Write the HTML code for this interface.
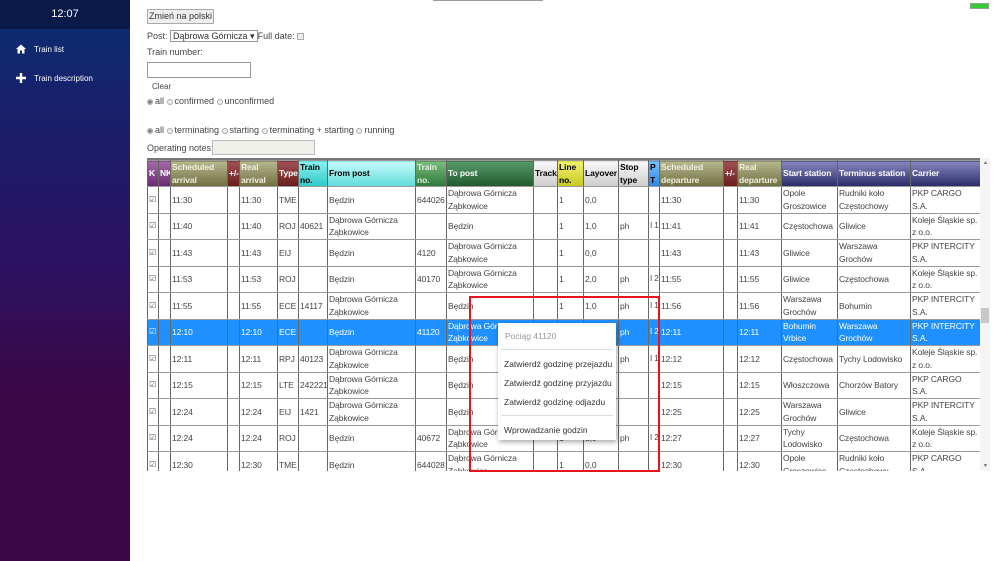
<!DOCTYPE html>
<html><head><meta charset="utf-8"><style>
*{box-sizing:border-box;margin:0;padding:0}
body{width:1000px;height:561px;overflow:hidden;background:#fff;font-family:"Liberation Sans",sans-serif;font-size:9px;color:#444;position:relative}
#side{position:absolute;left:0;top:0;width:130px;height:561px;background:linear-gradient(#0d2a70 29px,#1a1f6a 120px,#2c1262 260px,#3b0745 400px,#3b0745)}
#clock{height:29px;background:#0a1a48;color:#fff;font-size:11px;text-align:center;line-height:29px}
.nav{position:absolute;left:16px;color:#fff;font-size:8px;display:flex;align-items:center}
.nav svg{margin-right:8px}
.a{position:absolute}
.btn{left:147px;top:9px;width:67px;height:15px;border:1px solid #aaa;background:#eee;font-size:9px;line-height:13px;text-align:center;color:#333;white-space:nowrap}
.radio{display:inline-block;width:6px;height:6px;border:1px solid #aaa;border-radius:50%;background:#eee;vertical-align:-1px;margin-right:2px}
.radio.on{background:radial-gradient(#777 1.5px,#eee 2px)}
#tw{position:absolute;left:147px;top:158px;width:833px;height:313px;overflow:hidden;border-top:2px solid #777}
table{border-collapse:collapse;table-layout:fixed;width:833px}
td,th{border:1px solid #666;border-top-color:#999;border-bottom-color:#999;padding:0 0 0 1px;overflow:hidden;line-height:12.5px;font-size:8.5px;text-align:left;vertical-align:middle;letter-spacing:-0.1px}
th{height:24px;font-weight:bold;color:#fff}
td{height:26.5px}
.nw{white-space:nowrap}
.pu{background:linear-gradient(#a56aa8,#6a2a72)}
.ol{background:linear-gradient(#b8b890,#6e6e40);color:#f0f0e0}
.mr{background:linear-gradient(#a05050,#6a1c1c)}
.cy{background:linear-gradient(#8af0f0,#30c8c8);color:#000}
.cy2{background:linear-gradient(#c8fafa,#60dcdc);color:#000}
.gn{background:linear-gradient(#7cbc7c,#2e7a3a);color:#e0f0e0}
.dg{background:linear-gradient(#5a9a6a,#1e5a2a)}
.lg{background:linear-gradient(#fafafa,#ccc);color:#000}
.ye{background:linear-gradient(#f0f070,#c8c820);color:#000}
.bl{background:linear-gradient(#7ac0ff,#2a88e8);color:#000}
.nv{background:linear-gradient(#8888c0,#2a2a6a)}
tr.sel td{background:#1e90ff;color:#fff}
.cb{font-size:8px;color:#555}
td:nth-child(15){white-space:nowrap;font-size:8px}
td:nth-child(6),td:nth-child(7),td:nth-child(9){white-space:nowrap}
.menu div{white-space:nowrap}
</style></head><body>
<div id="side"><div id="clock">12:07</div>
<div class="nav" style="top:44px"><svg width="10" height="10" viewBox="0 0 10 10"><path d="M5 0.5L0 5h1.5v4.5h2.5v-3h2v3h2.5V5H10z" fill="#fff"/></svg>Train list</div>
<div class="nav" style="top:73px"><svg width="10" height="10" viewBox="0 0 10 10"><path d="M3.8 0h2.4v3.8H10v2.4H6.2V10H3.8V6.2H0V3.8h3.8z" fill="#fff"/></svg>Train description</div>
</div>
<div class="a" style="left:433px;top:0;width:110px;height:1px;background:#999"></div>
<div class="a" style="left:970px;top:3px;width:19px;height:6px;background:#3c3;border:1px solid #8a8"></div>
<div class="a btn">Zmień na polski</div>
<div class="a" style="left:147px;top:30px;white-space:nowrap">Post: <span style="display:inline-block;border:1px solid #999;padding:0 2px;height:12px;line-height:11px;color:#333">Dąbrowa Górnicza ▾</span>Full date: <span style="display:inline-block;width:7px;height:7px;border:1px solid #aaa;background:#eee;vertical-align:-1px"></span></div>
<div class="a" style="left:147px;top:47px">Train number:</div>
<div class="a" style="left:147px;top:62px;width:104px;height:16px;border:1px solid #999"></div>
<div class="a" style="left:152px;top:82px;font-size:8px">Clear</div>
<div class="a" style="left:147px;top:96px;white-space:nowrap"><span class="radio on"></span>all <span class="radio"></span>confirmed <span class="radio"></span>unconfirmed</div>
<div class="a" style="left:147px;top:125px;white-space:nowrap"><span class="radio on"></span>all <span class="radio"></span>terminating <span class="radio"></span>starting <span class="radio"></span>terminating + starting <span class="radio"></span>running</div>
<div class="a" style="left:147px;top:143px">Operating notes:</div>
<div class="a" style="left:212px;top:140px;width:103px;height:15px;border:1px solid #bbb;background:#f0f0ea"></div>
<div id="tw"><table>
<colgroup><col style="width:11px"><col style="width:12px"><col style="width:57px"><col style="width:12px"><col style="width:38px"><col style="width:21px"><col style="width:29px"><col style="width:88px"><col style="width:31px"><col style="width:87px"><col style="width:24px"><col style="width:26px"><col style="width:35px"><col style="width:30px"><col style="width:11px"><col style="width:64px"><col style="width:14px"><col style="width:44px"><col style="width:56px"><col style="width:73px"><col style="width:70px"></colgroup>
<tr><th class="pu">K</th><th class="pu">NK</th><th class="ol">Scheduled arrival</th><th class="mr">+/-</th><th class="ol">Real arrival</th><th class="mr">Type</th><th class="cy">Train no.</th><th class="cy2">From post</th><th class="gn">Train no.</th><th class="dg">To post</th><th class="lg">Track</th><th class="ye">Line no.</th><th class="lg">Layover</th><th class="lg">Stop type</th><th class="bl">P T</th><th class="ol">Scheduled departure</th><th class="mr">+/-</th><th class="ol">Real departure</th><th class="nv nw">Start station</th><th class="nv nw">Terminus station</th><th class="nv">Carrier</th></tr>
<tr><td class="cb">☑</td><td></td><td>11:30</td><td></td><td>11:30</td><td>TME</td><td></td><td>Będzin</td><td>644026</td><td>Dąbrowa Górnicza Ząbkowice</td><td></td><td>1</td><td>0,0</td><td></td><td></td><td>11:30</td><td></td><td>11:30</td><td>Opole Groszowice</td><td>Rudniki koło Częstochowy</td><td>PKP CARGO<br>S.A.</td></tr>
<tr><td class="cb">☑</td><td></td><td>11:40</td><td></td><td>11:40</td><td>ROJ</td><td>40621</td><td>Dąbrowa Górnicza Ząbkowice</td><td></td><td>Będzin</td><td></td><td>1</td><td>1,0</td><td>ph</td><td>I 1</td><td>11:41</td><td></td><td>11:41</td><td>Częstochowa</td><td>Gliwice</td><td>Koleje Śląskie sp. z o.o.</td></tr>
<tr><td class="cb">☑</td><td></td><td>11:43</td><td></td><td>11:43</td><td>EIJ</td><td></td><td>Będzin</td><td>4120</td><td>Dąbrowa Górnicza Ząbkowice</td><td></td><td>1</td><td>0,0</td><td></td><td></td><td>11:43</td><td></td><td>11:43</td><td>Gliwice</td><td>Warszawa Grochów</td><td>PKP INTERCITY S.A.</td></tr>
<tr><td class="cb">☑</td><td></td><td>11:53</td><td></td><td>11:53</td><td>ROJ</td><td></td><td>Będzin</td><td>40170</td><td>Dąbrowa Górnicza Ząbkowice</td><td></td><td>1</td><td>2,0</td><td>ph</td><td>I 2</td><td>11:55</td><td></td><td>11:55</td><td>Gliwice</td><td>Częstochowa</td><td>Koleje Śląskie sp. z o.o.</td></tr>
<tr><td class="cb">☑</td><td></td><td>11:55</td><td></td><td>11:55</td><td>ECE</td><td>14117</td><td>Dąbrowa Górnicza Ząbkowice</td><td></td><td>Będzin</td><td></td><td>1</td><td>1,0</td><td>ph</td><td>I 1</td><td>11:56</td><td></td><td>11:56</td><td>Warszawa Grochów</td><td>Bohumin</td><td>PKP INTERCITY S.A.</td></tr>
<tr class="sel"><td class="cb">☑</td><td></td><td>12:10</td><td></td><td>12:10</td><td>ECE</td><td></td><td>Będzin</td><td>41120</td><td>Dąbrowa Górnicza Ząbkowice</td><td></td><td>1</td><td>1,0</td><td>ph</td><td>I 2</td><td>12:11</td><td></td><td>12:11</td><td>Bohumin Vrbice</td><td>Warszawa Grochów</td><td>PKP INTERCITY S.A.</td></tr>
<tr><td class="cb">☑</td><td></td><td>12:11</td><td></td><td>12:11</td><td>RPJ</td><td>40123</td><td>Dąbrowa Górnicza Ząbkowice</td><td></td><td>Będzin</td><td></td><td>1</td><td>1,0</td><td>ph</td><td>I 1</td><td>12:12</td><td></td><td>12:12</td><td>Częstochowa</td><td>Tychy Lodowisko</td><td>Koleje Śląskie sp. z o.o.</td></tr>
<tr><td class="cb">☑</td><td></td><td>12:15</td><td></td><td>12:15</td><td>LTE</td><td>242221</td><td>Dąbrowa Górnicza Ząbkowice</td><td></td><td>Będzin</td><td></td><td>1</td><td>0,0</td><td></td><td></td><td>12:15</td><td></td><td>12:15</td><td>Włoszczowa</td><td>Chorzów Batory</td><td>PKP CARGO<br>S.A.</td></tr>
<tr><td class="cb">☑</td><td></td><td>12:24</td><td></td><td>12:24</td><td>EIJ</td><td>1421</td><td>Dąbrowa Górnicza Ząbkowice</td><td></td><td>Będzin</td><td></td><td>1</td><td>1,0</td><td></td><td></td><td>12:25</td><td></td><td>12:25</td><td>Warszawa Grochów</td><td>Gliwice</td><td>PKP INTERCITY S.A.</td></tr>
<tr><td class="cb">☑</td><td></td><td>12:24</td><td></td><td>12:24</td><td>ROJ</td><td></td><td>Będzin</td><td>40672</td><td>Dąbrowa Górnicza Ząbkowice</td><td></td><td>1</td><td>3,0</td><td>ph</td><td>I 2</td><td>12:27</td><td></td><td>12:27</td><td>Tychy Lodowisko</td><td>Częstochowa</td><td>Koleje Śląskie sp. z o.o.</td></tr>
<tr><td class="cb">☑</td><td></td><td>12:30</td><td></td><td>12:30</td><td>TME</td><td></td><td>Będzin</td><td>644028</td><td>Dąbrowa Górnicza Ząbkowice</td><td></td><td>1</td><td>0,0</td><td></td><td></td><td>12:30</td><td></td><td>12:30</td><td>Opole Groszowice</td><td>Rudniki koło Częstochowy</td><td>PKP CARGO<br>S.A.</td></tr>
</table></div>
<div class="a" style="left:980px;top:158px;width:10px;height:313px;background:#f4f4f4"></div>
<div class="a" style="left:983px;top:160px;font-size:5px;color:#666">▲</div>
<div class="a" style="left:983px;top:463px;font-size:5px;color:#666">▼</div>
<div class="a" style="left:981px;top:308px;width:8px;height:15px;background:#c8c8c8"></div>
<div class="a" style="left:469px;top:296px;width:191px;height:176px;border:2px solid #e8141c"></div>
<div class="a menu" style="left:498px;top:323px;width:118px;height:117px;background:#fff;box-shadow:1px 2px 5px rgba(0,0,0,.35);font-size:8.5px;color:#333">
<div style="position:absolute;left:7px;top:8px;color:#999">Pociąg 41120</div>
<div style="position:absolute;left:3px;right:3px;top:26px;height:1px;background:#ddd"></div>
<div style="position:absolute;left:6px;top:36px">Zatwierdź godzinę przejazdu</div>
<div style="position:absolute;left:6px;top:55px">Zatwierdź godzinę przyjazdu</div>
<div style="position:absolute;left:6px;top:74px">Zatwierdź godzinę odjazdu</div>
<div style="position:absolute;left:3px;right:3px;top:92px;height:1px;background:#ddd"></div>
<div style="position:absolute;left:6px;top:102px">Wprowadzanie godzin</div>
</div>
</body></html>
